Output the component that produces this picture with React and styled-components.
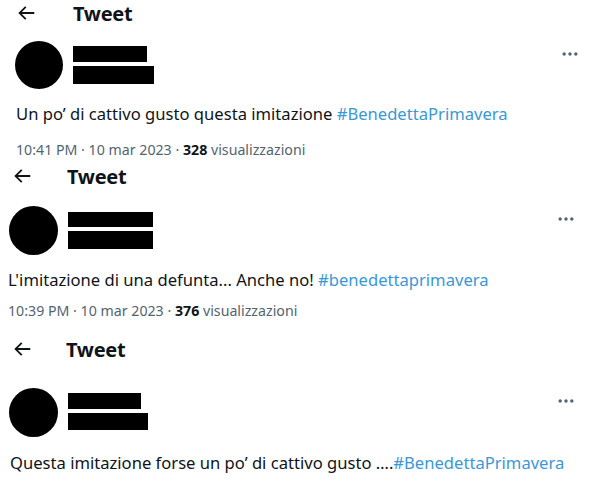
import React from 'react'
import styled, { createGlobalStyle } from 'styled-components'

const GlobalStyle = createGlobalStyle`
  html, body {
    margin: 0;
    padding: 0;
    background: #ffffff;
  }
  body {
    font-family: 'Noto Sans', 'Open Sans', sans-serif;
    color: #0f1419;
    width: 590px;
    height: 479px;
    overflow: hidden;
  }
`

const Page = styled.div`
  display: flex;
  flex-direction: column;
  width: 590px;
`

const Panel = styled.div`
  height: ${p => p.$height}px;
  padding-right: ${p => p.$right}px;
  display: flex;
  flex-direction: column;
`

const Header = styled.div`
  height: 26px;
  display: flex;
  align-items: center;
`

const BackButton = styled.div`
  width: 22px;
  height: 22px;
  margin-left: ${p => p.$x}px;
  display: flex;
  color: #0f1419;
`

const Title = styled.div`
  margin-left: ${p => p.$gap}px;
  font-size: 20px;
  font-weight: 700;
  letter-spacing: -0.3px;
`

const Author = styled.div`
  margin-top: ${p => p.$top}px;
  display: flex;
  align-items: flex-start;
`

const Avatar = styled.div`
  width: ${p => p.$size}px;
  height: ${p => p.$size}px;
  margin-left: ${p => p.$x}px;
  border-radius: 50%;
  background: #000;
  flex-shrink: 0;
`

const Redacted = styled.div`
  margin-top: ${p => p.$top}px;
  margin-left: ${p => p.$gap}px;
  display: flex;
  flex-direction: column;
  gap: 4px;
`

const Bar = styled.div`
  width: ${p => p.$w}px;
  height: ${p => p.$h}px;
  background: #000;
`

const More = styled.div`
  margin-left: auto;
  margin-top: 3px;
  width: 20px;
  height: 20px;
  color: #536471;
  display: flex;
`

const Body = styled.div`
  margin-top: ${p => p.$top}px;
  margin-left: ${p => p.$x}px;
  font-size: ${p => p.$size}px;
  line-height: 20px;
  white-space: nowrap;
`

const Hashtag = styled.span`
  color: #3a98d6;
`

const Meta = styled.div`
  margin-top: ${p => p.$top}px;
  margin-left: ${p => p.$x}px;
  font-size: 14.2px;
  line-height: 18px;
  color: #536471;
  white-space: nowrap;
`

const Count = styled.span`
  color: #0f1419;
  font-weight: 700;
`

const ArrowIcon = () => (
  <svg viewBox="0 0 24 24" width="22" height="22" fill="currentColor">
    <path d="M7.414 13l5.043 5.04-1.414 1.42L3.586 12l7.457-7.46 1.414 1.42L7.414 11H21v2H7.414z" />
  </svg>
)

const DotsIcon = () => (
  <svg viewBox="0 0 24 24" width="20" height="20" fill="currentColor">
    <path d="M3 12c0-1.1.9-2 2-2s2 .9 2 2-.9 2-2 2-2-.9-2-2zm9 2c1.1 0 2-.9 2-2s-.9-2-2-2-2 .9-2 2 .9 2 2 2zm7 0c1.1 0 2-.9 2-2s-.9-2-2-2-2 .9-2 2 .9 2 2 2z" />
  </svg>
)

const tweets = [
  {
    height: 163,
    right: 10,
    arrowX: 15,
    titleGap: 36,
    authorTop: 15,
    avatarX: 15,
    avatarSize: 48,
    barsTop: 5,
    barsGap: 10,
    bars: [[74, 16], [81, 18]],
    bodyTop: 15,
    bodyX: 16,
    bodySize: 16.6,
    metaTop: 17,
    text: 'Un po’ di cattivo gusto questa imitazione ',
    tag: '#BenedettaPrimavera',
    time: '10:41 PM · 10 mar 2023 · ',
    views: '328',
  },
  {
    height: 173,
    right: 14,
    arrowX: 11,
    titleGap: 34,
    authorTop: 17,
    avatarX: 9,
    avatarSize: 49,
    barsTop: 6,
    barsGap: 10,
    bars: [[85, 15], [85, 18]],
    bodyTop: 15,
    bodyX: 8,
    bodySize: 16.6,
    metaTop: 12,
    text: 'L\'imitazione di una defunta... Anche no! ',
    tag: '#benedettaprimavera',
    time: '10:39 PM · 10 mar 2023 · ',
    views: '376',
  },
  {
    height: 143,
    right: 14,
    arrowX: 11,
    titleGap: 33,
    authorTop: 26,
    avatarX: 9,
    avatarSize: 49,
    barsTop: 5,
    barsGap: 10,
    bars: [[73, 16], [80, 17]],
    bodyTop: 16,
    bodyX: 10,
    bodySize: 16.6,
    text: 'Questa imitazione forse un po’ di cattivo gusto ….',
    tag: '#BenedettaPrimavera',
  },
]

const TweetShot = ({ t }) => (
  <Panel $height={t.height} $right={t.right}>
    <Header>
      <BackButton $x={t.arrowX}>
        <ArrowIcon />
      </BackButton>
      <Title $gap={t.titleGap}>Tweet</Title>
    </Header>
    <Author $top={t.authorTop}>
      <Avatar $x={t.avatarX} $size={t.avatarSize} />
      <Redacted $top={t.barsTop} $gap={t.barsGap}>
        {t.bars.map(([w, h], i) => (
          <Bar key={i} $w={w} $h={h} />
        ))}
      </Redacted>
      <More>
        <DotsIcon />
      </More>
    </Author>
    <Body $top={t.bodyTop} $x={t.bodyX} $size={t.bodySize}>
      {t.text}
      <Hashtag>{t.tag}</Hashtag>
    </Body>
    {t.time && (
      <Meta $top={t.metaTop} $x={t.bodyX}>
        {t.time}
        <Count>{t.views}</Count> visualizzazioni
      </Meta>
    )}
  </Panel>
)

export default function App() {
  return (
    <Page>
      <GlobalStyle />
      {tweets.map((t, i) => (
        <TweetShot key={i} t={t} />
      ))}
    </Page>
  )
}
